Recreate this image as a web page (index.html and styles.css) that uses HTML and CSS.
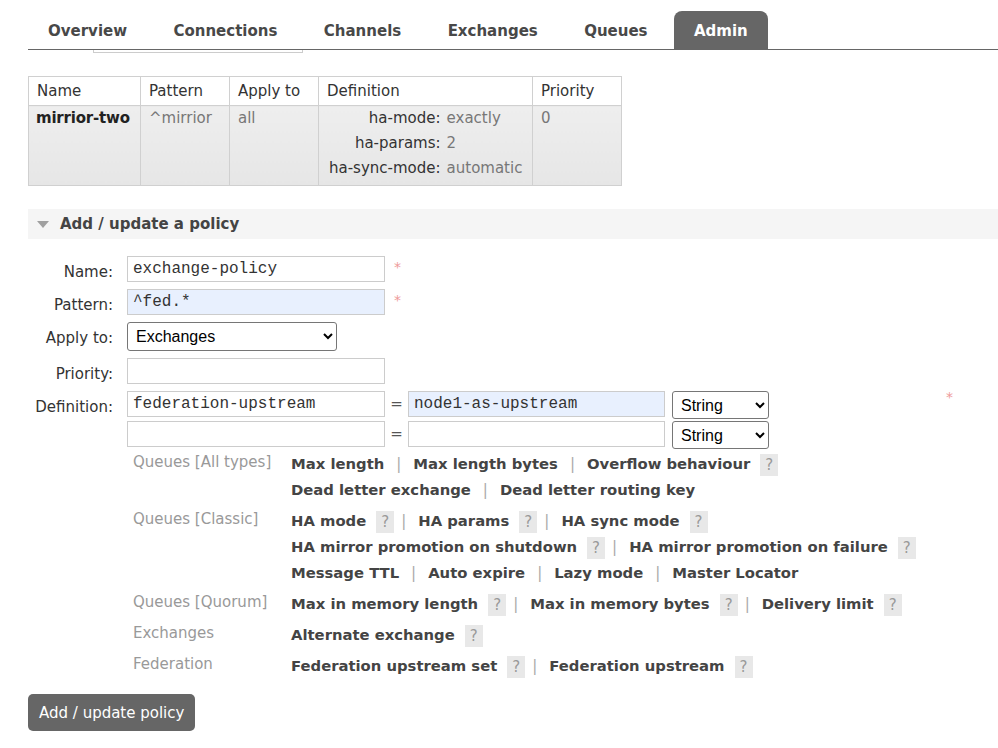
FILE: index.html
```html
<!DOCTYPE html>
<html>
<head>
<meta charset="utf-8">
<link rel="stylesheet" href="styles.css">
</head>
<body>
<ul class="nav">
  <li class="tab">Overview</li>
  <li class="tab">Connections</li>
  <li class="tab">Channels</li>
  <li class="tab">Exchanges</li>
  <li class="tab">Queues</li>
  <li class="tab active">Admin</li>
</ul>
<div class="scrollbox"></div>

<table class="policies">
  <colgroup>
    <col class="c-name"><col class="c-pat"><col class="c-apply"><col class="c-def"><col class="c-pri">
  </colgroup>
  <thead>
    <tr><th>Name</th><th>Pattern</th><th>Apply to</th><th>Definition</th><th>Priority</th></tr>
  </thead>
  <tbody>
    <tr>
      <td class="strong">mirrior-two</td>
      <td class="muted">^mirrior</td>
      <td class="muted">all</td>
      <td class="def">
        <div class="kv">
          <span class="k">ha-mode:</span><span class="v">exactly</span>
          <span class="k">ha-params:</span><span class="v">2</span>
          <span class="k">ha-sync-mode:</span><span class="v">automatic</span>
        </div>
      </td>
      <td class="muted">0</td>
    </tr>
  </tbody>
</table>

<div class="section-h"><span class="tri"></span><span>Add / update a policy</span></div>

<div class="form">
  <div class="row r-name">
    <label>Name:</label>
    <input class="txt" type="text" value="exchange-policy">
    <span class="req">*</span>
  </div>
  <div class="row r-pat">
    <label>Pattern:</label>
    <input class="txt autofill" type="text" value="^fed.*">
    <span class="req">*</span>
  </div>
  <div class="row r-apply">
    <label>Apply to:</label>
    <select class="sel-apply"><option>Exchanges</option></select>
  </div>
  <div class="row r-pri">
    <label>Priority:</label>
    <input class="txt" type="text" value="">
  </div>
  <div class="row r-def">
    <label>Definition:</label>
    <input class="txt" type="text" value="federation-upstream">
    <span class="eq">=</span>
    <input class="txt val autofill" type="text" value="node1-as-upstream">
    <select class="sel-type"><option>String</option></select>
    <span class="req far">*</span>
  </div>
  <div class="row r-def2">
    <label></label>
    <input class="txt" type="text" value="">
    <span class="eq">=</span>
    <input class="txt val" type="text" value="">
    <select class="sel-type"><option>String</option></select>
  </div>

  <div class="help">
    <div class="grp">
      <div class="hl">Queues [All types]</div>
      <div class="links">
        <div class="line"><b>Max length</b><span class="sep">|</span><b>Max length bytes</b><span class="sep">|</span><b>Overflow behaviour</b><span class="q">?</span></div>
        <div class="line"><b>Dead letter exchange</b><span class="sep">|</span><b>Dead letter routing key</b></div>
      </div>
    </div>
    <div class="grp">
      <div class="hl">Queues [Classic]</div>
      <div class="links">
        <div class="line"><b>HA mode</b><span class="q">?</span><span class="sep">|</span><b>HA params</b><span class="q">?</span><span class="sep">|</span><b>HA sync mode</b><span class="q">?</span></div>
        <div class="line"><b>HA mirror promotion on shutdown</b><span class="q">?</span><span class="sep">|</span><b>HA mirror promotion on failure</b><span class="q">?</span></div>
        <div class="line"><b>Message TTL</b><span class="sep">|</span><b>Auto expire</b><span class="sep">|</span><b>Lazy mode</b><span class="sep">|</span><b>Master Locator</b></div>
      </div>
    </div>
    <div class="grp">
      <div class="hl">Queues [Quorum]</div>
      <div class="links">
        <div class="line"><b>Max in memory length</b><span class="q">?</span><span class="sep">|</span><b>Max in memory bytes</b><span class="q">?</span><span class="sep">|</span><b>Delivery limit</b><span class="q">?</span></div>
      </div>
    </div>
    <div class="grp">
      <div class="hl">Exchanges</div>
      <div class="links">
        <div class="line"><b>Alternate exchange</b><span class="q">?</span></div>
      </div>
    </div>
    <div class="grp">
      <div class="hl">Federation</div>
      <div class="links">
        <div class="line"><b>Federation upstream set</b><span class="q">?</span><span class="sep">|</span><b>Federation upstream</b><span class="q">?</span></div>
      </div>
    </div>
  </div>
</div>

<button class="submit">Add / update policy</button>
</body>
</html>
```
FILE: styles.css
```css
body {
  margin: 0;
  font-family: "DejaVu Sans", Verdana, sans-serif;
  font-size: 15px;
  color: #444;
  background: #fff;
}

.nav {
  display: flex;
  list-style: none;
  margin: 11px 0 0 28px;
  padding: 0;
  border-bottom: 1px solid #666;
}
.tab {
  padding: 2px 20px 0;
  margin-right: 6.4px;
  line-height: 36px;
  font-weight: bold;
  color: #484848;
}
.tab.active {
  background: #666;
  color: #fff;
  border-radius: 8px 8px 0 0;
}

.scrollbox {
  margin-left: 93px;
  width: 208px;
  height: 2px;
  border: 1px solid #ccc;
  border-top: none;
}

.policies {
  margin: 23px 0 0 28px;
  border-collapse: collapse;
  table-layout: fixed;
  width: 594px;
}
.c-name { width: 112px; }
.c-pat { width: 89px; }
.c-apply { width: 89px; }
.c-def { width: 214px; }
.c-pri { width: 89px; }
.policies th,
.policies td {
  border: 1px solid #d0d0d0;
  text-align: left;
  vertical-align: top;
  padding: 2px 8px 1px;
  line-height: 25px;
  white-space: nowrap;
}
.policies th {
  font-weight: normal;
  color: #333;
  background: #fff;
}
.policies td {
  background: linear-gradient(#eeeeee, #e6e6e6);
  padding: 0 8px 4px;
}
.policies td.strong { font-weight: bold; color: #222; padding-left: 7px; letter-spacing: -0.2px; }
.policies td.muted { color: #777; }
.policies td.def { padding-left: 10px; }
.kv {
  display: grid;
  grid-template-columns: auto auto;
  column-gap: 6px;
  justify-content: start;
}
.kv .k { text-align: right; color: #333; }
.kv .v { color: #777; }

.section-h {
  margin: 23px 0 0 28px;
  height: 30px;
  background: #f5f5f5;
  display: flex;
  align-items: center;
  padding-left: 9px;
  font-weight: bold;
  color: #444;
}
.tri {
  width: 0;
  height: 0;
  border-left: 6px solid transparent;
  border-right: 6px solid transparent;
  border-top: 7px solid #a0a0a0;
  margin-right: 11px;
}

.form {
  margin: 17px 0 0 28px;
}
.row {
  display: flex;
  align-items: flex-start;
}
.row label {
  width: 85px;
  margin-right: 14px;
  text-align: right;
  color: #333;
  line-height: 18px;
  padding-top: 7px;
}
.r-pat { margin-top: 7px; }
.r-apply { margin-top: 7px; }
.r-pri { margin-top: 7px; }
.r-def { margin-top: 7px; }
.r-def2 { margin-top: 2px; }

.txt {
  box-sizing: border-box;
  width: 258px;
  height: 26px;
  border: 1px solid #ccc;
  padding: 0 5px;
  font-family: "Liberation Mono", "Courier New", monospace;
  font-size: 16px;
  color: #333;
  background: #fff;
  outline: none;
}
.txt.autofill { background: #e8f0fe; }
.txt.val { width: 257px; }

.req {
  color: #e99;
  margin-left: 9px;
  font-size: 14px;
  line-height: 18px;
  padding-top: 2px;
}
.req.far { margin-left: 177px; padding-top: 0; line-height: 12px; }

.eq {
  width: 23px;
  text-align: center;
  color: #555;
  line-height: 18px;
  padding-top: 4px;
}

.sel-apply {
  box-sizing: border-box;
  width: 210px;
  height: 29px;
  border: 1px solid #767676;
  border-radius: 3px;
  font-family: "Liberation Sans", Arial, sans-serif;
  font-size: 16px;
  color: #000;
  background: #fff;
  padding: 0 4px;
}
.sel-type {
  box-sizing: border-box;
  width: 97px;
  height: 28px;
  margin-left: 7px;
  border: 1px solid #767676;
  border-radius: 3px;
  font-family: "Liberation Sans", Arial, sans-serif;
  font-size: 16px;
  color: #000;
  background: #fff;
  padding: 0 4px;
}

.help {
  margin: 2px 0 0 105px;
}
.grp {
  display: flex;
  margin-top: 5px;
}
.grp:first-child { margin-top: 0; }
.hl {
  width: 158px;
  color: #999;
  line-height: 22px;
}
.line {
  line-height: 26px;
  white-space: nowrap;
}
.line b { color: #444; font-size: 14.8px; }
.sep {
  color: #aaa;
  margin: 0 12px;
}
.q + .sep { margin-left: 7px; }
.q {
  display: inline-block;
  width: 18px;
  height: 22px;
  line-height: 22px;
  text-align: center;
  background: #e8e8e8;
  color: #999;
  margin-left: 10px;
  vertical-align: middle;
}

.submit {
  margin: 15px 0 0 28px;
  height: 37px;
  padding: 0 11px;
  border: none;
  border-radius: 5px;
  background: #666;
  color: #fff;
  font-family: "DejaVu Sans", Verdana, sans-serif;
  font-size: 15px;
}
```
